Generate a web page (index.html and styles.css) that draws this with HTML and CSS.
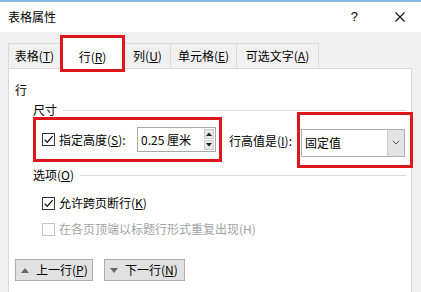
FILE: index.html
```html
<!DOCTYPE html>
<html lang="zh-CN">
<head>
<meta charset="utf-8">
<title>表格属性</title>
<link rel="stylesheet" href="styles.css">
</head>
<body>
<div class="window">
  <div class="titlebar">
    <span class="title">表格属性</span>
    <span class="help">?</span>
    <span class="close"><svg width="10" height="10" viewBox="0 0 10 10"><path d="M0.5 0.5 L9.5 9.5 M9.5 0.5 L0.5 9.5" stroke="#111" stroke-width="1.1" fill="none"/></svg></span>
  </div>
  <div class="client">
    <div class="tabs">
      <div class="tab w1">表格(<u>T</u>)</div>
      <div class="tab active">行(<u>R</u>)</div>
      <div class="tab w3">列(<u>U</u>)</div>
      <div class="tab w4">单元格(<u>E</u>)</div>
      <div class="tab w5">可选文字(<u>A</u>)</div>
    </div>
    <div class="panel">
      <div class="heading">行</div>
      <div class="group">
        <div class="group-title"><span>尺寸</span><i class="rule"></i></div>
        <div class="size-row">
          <div class="mark mark-a">
            <span class="check"><svg width="11" height="11" viewBox="0 0 11 11"><path d="M1.6 5.6 L4.2 8.3 L9.6 2.2" stroke="#000" stroke-width="1.2" fill="none"/></svg></span>
            <span class="cb-text">指定高度(<u>S</u>):</span>
            <div class="spin">
              <span class="val">0.25 厘米</span>
              <div class="spin-btns">
                <b class="sb"><svg width="6" height="4" viewBox="0 0 6 4"><path d="M0 4 L3 0.5 L6 4 Z" fill="#222"/></svg></b>
                <b class="sb"><svg width="6" height="4" viewBox="0 0 6 4"><path d="M0 0 L3 3.5 L6 0 Z" fill="#222"/></svg></b>
              </div>
            </div>
          </div>
          <span class="lbl">行高值是(<u>I</u>):</span>
          <div class="mark mark-b">
            <div class="select">
              <span class="sel-val">固定值</span>
              <span class="arrow"><svg width="8" height="5" viewBox="0 0 8 5"><path d="M0.8 0.8 L4 4 L7.2 0.8" stroke="#555" stroke-width="1" fill="none"/></svg></span>
            </div>
          </div>
        </div>
      </div>
      <div class="group options">
        <div class="group-title"><span>选项(<u>O</u>)</span><i class="rule"></i></div>
        <div class="opt">
          <span class="check"><svg width="11" height="11" viewBox="0 0 11 11"><path d="M1.6 5.6 L4.2 8.3 L9.6 2.2" stroke="#000" stroke-width="1.2" fill="none"/></svg></span>
          <span class="cb-text">允许跨页断行(<u>K</u>)</span>
        </div>
        <div class="opt disabled">
          <span class="check"></span>
          <span class="cb-text">在各页顶端以标题行形式重复出现(H)</span>
        </div>
      </div>
      <div class="buttons">
        <div class="btn b1"><svg width="8" height="5" viewBox="0 0 8 5"><path d="M0 5 L4 0 L8 5 Z" fill="#666"/></svg><span>上一行(<u>P</u>)</span></div>
        <div class="btn b2"><svg width="8" height="5" viewBox="0 0 8 5"><path d="M0 0 L4 5 L8 0 Z" fill="#666"/></svg><span>下一行(<u>N</u>)</span></div>
      </div>
    </div>
  </div>
</div>
</body>
</html>
```
FILE: styles.css
```css
html, body {
  margin: 0;
  padding: 0;
}
body {
  width: 421px;
  height: 292px;
  overflow: hidden;
  background: #f0f0f0;
  color: #000;
  font-family: "Noto Sans CJK SC", "Microsoft YaHei", sans-serif;
  font-size: 12px;
  line-height: 16px;
}
u {
  text-decoration: underline;
  text-underline-offset: 1px;
}
.titlebar {
  height: 30px;
  border-top: 2px solid #8ab9e0;
  background: #fff;
  display: flex;
  align-items: center;
  padding-left: 8px;
}
.title {
  flex: 1;
}
.help {
  font-family: "Liberation Sans", sans-serif;
  font-size: 13px;
  margin-right: 37px;
}
.close {
  display: flex;
  margin-right: 16px;
}
.client {
  background: #f0f0f0;
}
.tabs {
  display: flex;
  align-items: flex-end;
  padding: 3px 0 0 8px;
}
.tab {
  box-sizing: border-box;
  height: 25px;
  border: 1px solid #d9d9d9;
  border-bottom: none;
  display: flex;
  align-items: center;
  justify-content: center;
  flex-shrink: 0;
}
.w1 { width: 52px; border-right: none; }
.w3 { width: 46px; border-left: none; }
.w4 { width: 66px; border-left: none; }
.w5 { width: 82px; border-left: none; }
.tab.active {
  width: 65px;
  height: 37px;
  border: 3px solid #e1151c;
  background: #fff;
  margin-bottom: -4px;
  padding-top: 6px;
  position: relative;
  z-index: 2;
}
.panel {
  background: #fff;
  border: 1px solid #d9d9d9;
  border-bottom: none;
  margin: 0 9px 0 8px;
  padding: 13px 5px 0 6px;
  height: 210px;
}
.heading {
  height: 16px;
}
.group {
  margin-left: 18px;
  margin-top: 4px;
}
.group-title {
  display: flex;
  align-items: center;
  height: 16px;
}
.rule {
  flex: 1;
  height: 1px;
  background: #dcdcdc;
  margin-left: 6px;
}
.size-row {
  display: flex;
  align-items: center;
  margin-top: -1px;
}
.mark {
  box-sizing: border-box;
  border: 3px solid #e1151c;
  flex-shrink: 0;
  display: flex;
  align-items: center;
}
.mark-a {
  width: 189px;
  height: 45px;
  padding: 0 3px 0 6px;
}
.check {
  box-sizing: border-box;
  width: 13px;
  height: 13px;
  border: 1px solid #333;
  background: #fff;
  display: flex;
  flex-shrink: 0;
}
.cb-text {
  margin-left: 4px;
  white-space: nowrap;
}
.spin {
  box-sizing: border-box;
  margin-left: auto;
  width: 79px;
  height: 25px;
  border: 1px solid #a8a8a8;
  display: flex;
  align-items: center;
  padding: 1px 1px 1px 3px;
}
.val {
  flex: 1;
  white-space: nowrap;
}
.spin-btns {
  width: 10px;
  height: 21px;
  display: flex;
  flex-direction: column;
  gap: 1px;
}
.sb {
  flex: 1;
  box-sizing: border-box;
  background: #e6e6e6;
  border: 1px solid #cdcdcd;
  display: flex;
  align-items: center;
  justify-content: center;
}
.lbl {
  margin-left: 7px;
  white-space: nowrap;
  padding-top: 3px;
}
.mark-b {
  width: 116px;
  height: 56px;
  margin: -6px -7px -6px auto;
  padding: 6px 5px 0 1px;
}
.select {
  box-sizing: border-box;
  width: 104px;
  height: 28px;
  border: 1px solid #adadad;
  background: #fff;
  display: flex;
  align-items: stretch;
}
.sel-val {
  flex: 1;
  padding-left: 3px;
  display: flex;
  align-items: center;
}
.arrow {
  width: 16px;
  background: #e3e3e3;
  border-left: 1px solid #cccccc;
  display: flex;
  align-items: center;
  justify-content: center;
}
.options {
  margin-top: 5px;
}
.opt {
  display: flex;
  align-items: center;
  height: 16px;
  margin-left: 9px;
  margin-top: 12px;
}
.opt + .opt {
  margin-top: 10px;
}
.opt.disabled {
  color: #a3a3a3;
}
.opt.disabled .check {
  border-color: #c4c4c4;
}
.buttons {
  display: flex;
  gap: 11px;
  margin-top: 22px;
}
.btn {
  box-sizing: border-box;
  height: 22px;
  border: 1px solid #adadad;
  background: #e1e1e1;
  display: flex;
  align-items: center;
  gap: 7px;
  padding-left: 5px;
}
.b1 { width: 78px; }
.b2 { width: 81px; }
```
